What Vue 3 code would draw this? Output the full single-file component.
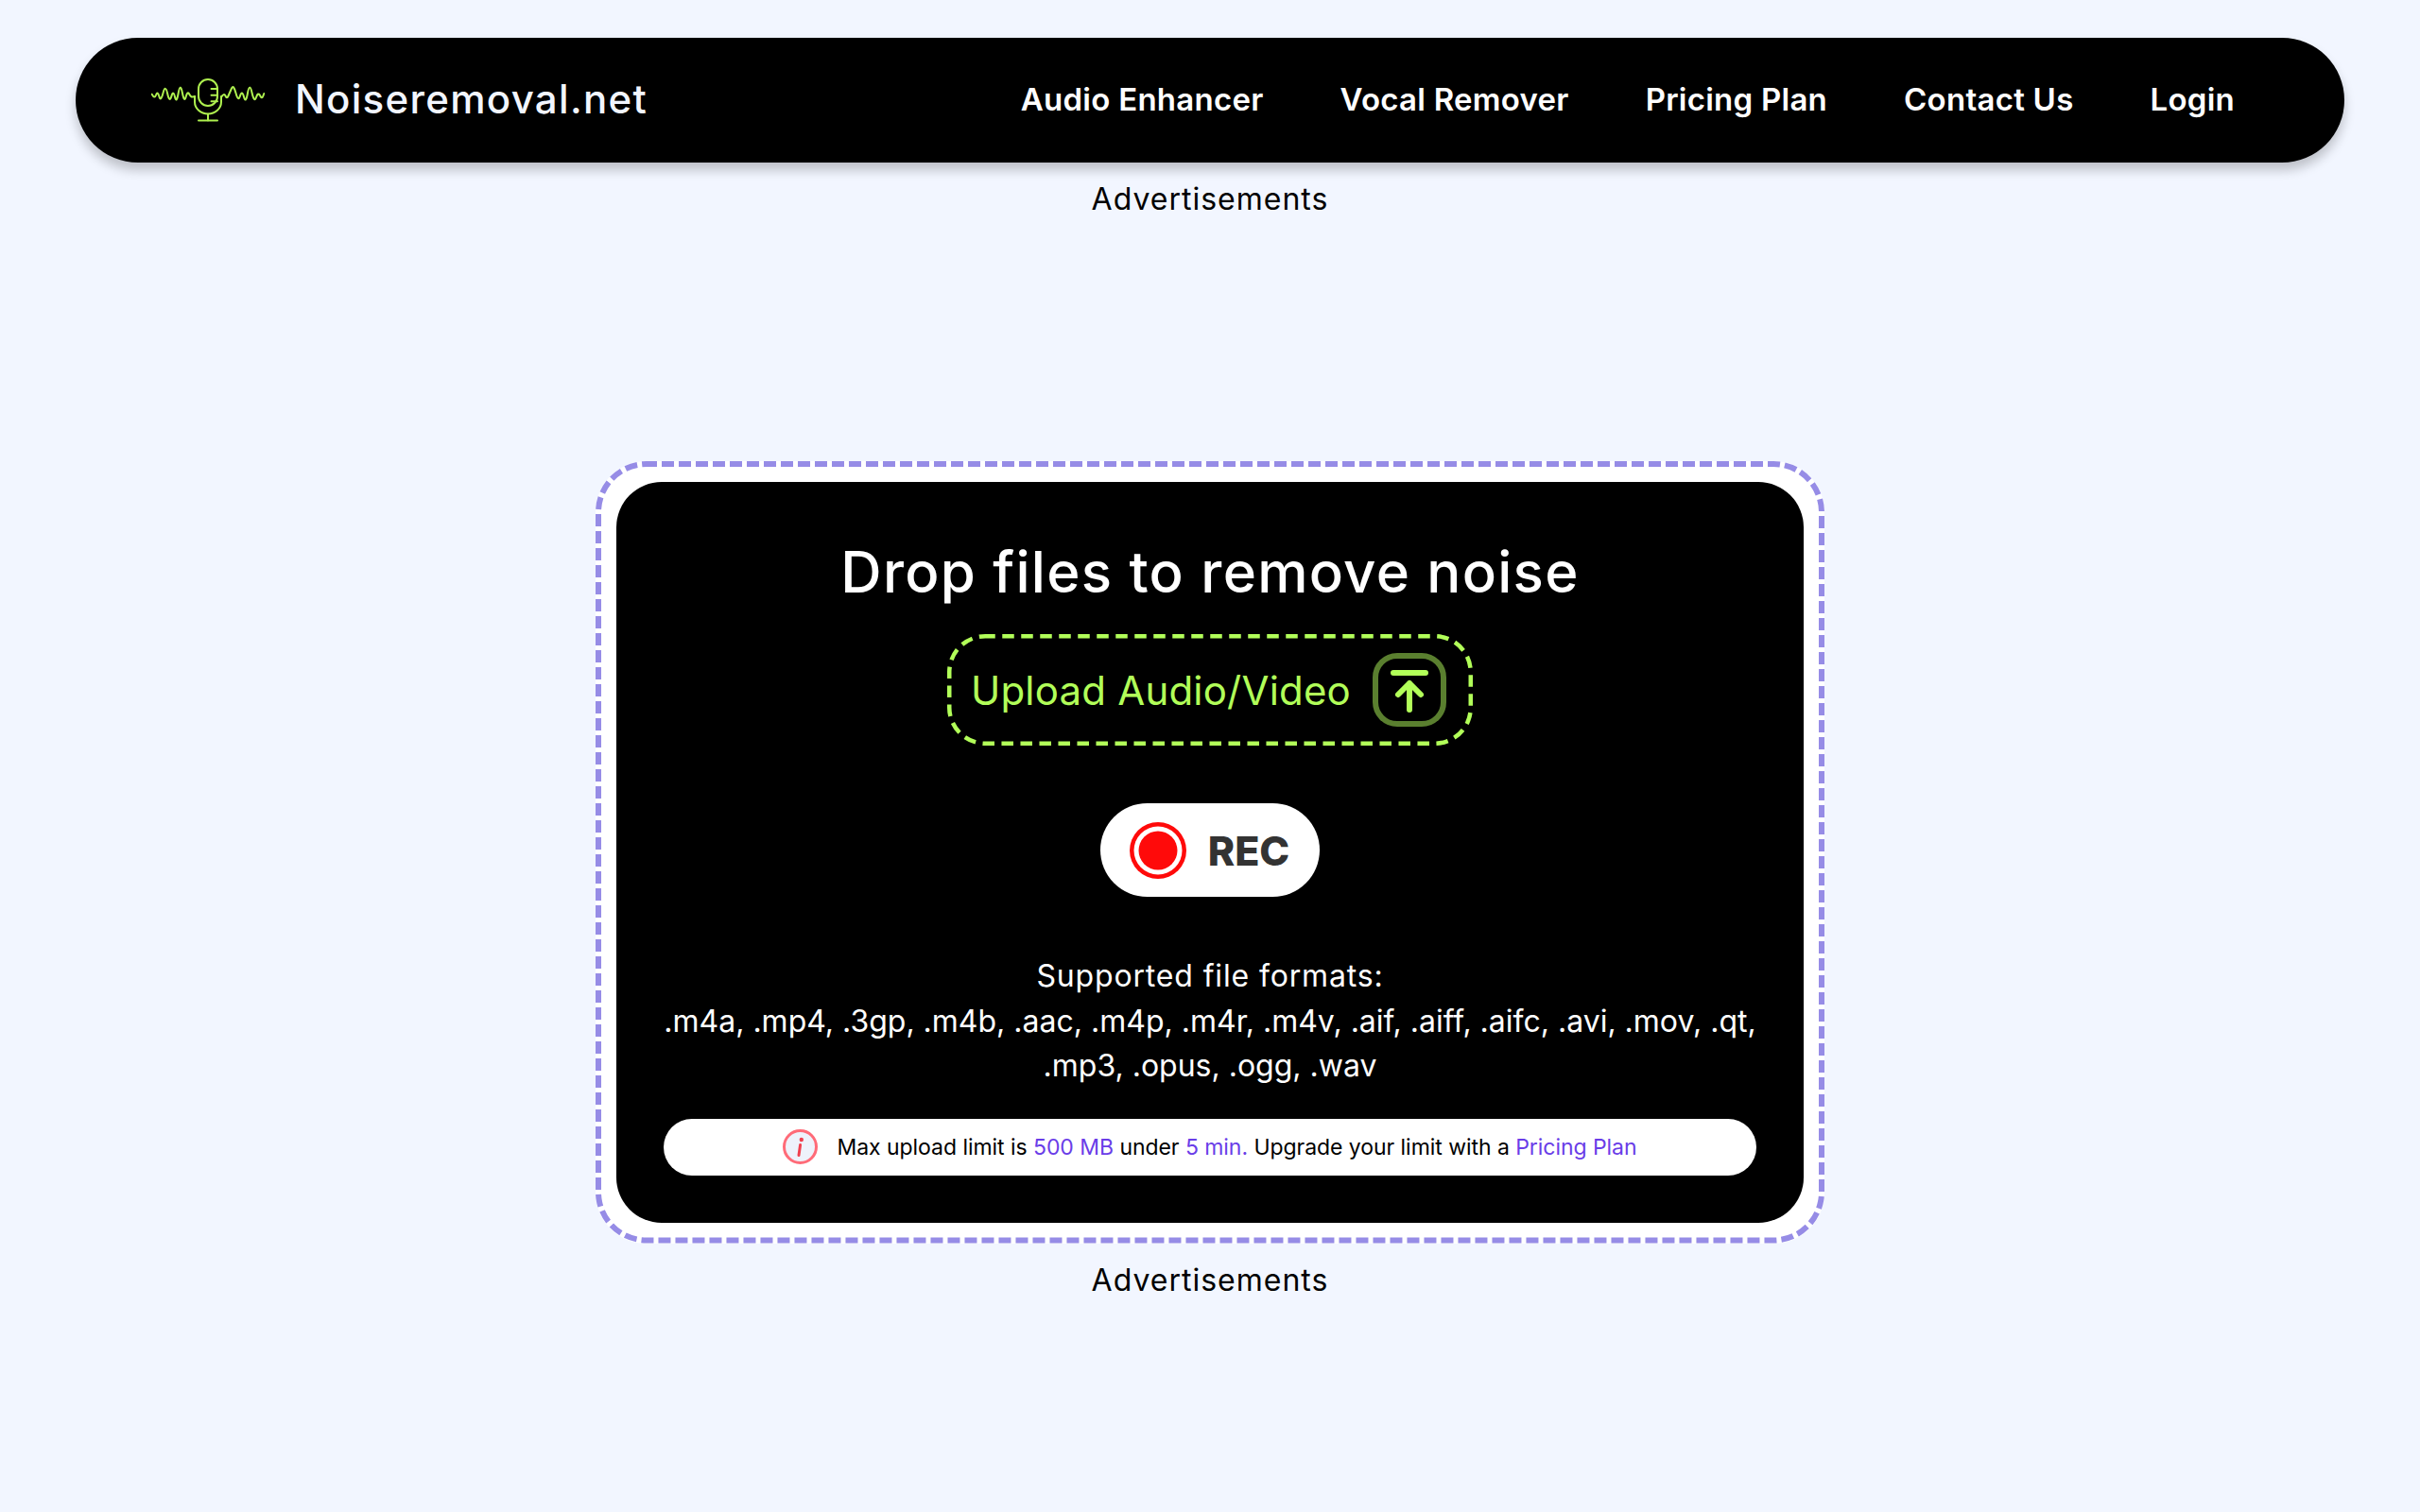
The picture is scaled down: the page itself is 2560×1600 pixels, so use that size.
<template>
  <div class="page">
    <header class="navbar">
      <div class="brand">
        <svg class="brand-logo" viewBox="0 0 120 46" fill="none" stroke="#aef04f" stroke-width="2" stroke-linecap="round" stroke-linejoin="round">
          <path :d="waveLeft" />
          <path :d="waveRight" />
          <rect x="50" y="1" width="20" height="28" rx="10" />
          <path d="M63.5 11H70M63.5 17.7H70M63.5 24.3H70" />
          <path d="M46 19v6a14 12.5 0 0 0 28 0v-6" />
          <path d="M60 37.7v7M50 44.6h20" />
        </svg>
        <span class="brand-name">Noiseremoval.net</span>
      </div>
      <nav class="nav-links">
        <a v-for="link in links" :key="link" class="nav-link">{{ link }}</a>
      </nav>
    </header>

    <p class="ad-label ad-top">Advertisements</p>

    <section class="drop-zone">
      <svg class="dash-frame"><rect class="dash-outer" /></svg>
      <div class="drop-card">
        <h1 class="drop-title">Drop files to remove noise</h1>

        <div class="upload-row">
          <button class="upload-btn">
            <svg class="dash-frame"><rect class="dash-upload" /></svg>
            <span class="upload-text">Upload Audio/Video</span>
            <svg class="upload-icon" viewBox="0 0 78 78" fill="none" stroke-linecap="round" stroke-linejoin="round">
              <rect x="3" y="3" width="72" height="72" rx="23" stroke="#5a7f2f" stroke-width="6" />
              <path d="M22 21h34M39 32v28M27 44l12-12 12 12" stroke="#b2ff59" stroke-width="6" />
            </svg>
          </button>
        </div>

        <div class="rec-row">
          <button class="rec-btn">
            <svg class="rec-dot" viewBox="0 0 60 60">
              <circle cx="30" cy="30" r="30" fill="#ff0a0a" />
              <circle cx="30" cy="30" r="25.5" fill="#fff" />
              <circle cx="30" cy="30" r="20.5" fill="#ff0a0a" />
            </svg>
            <span class="rec-text">REC</span>
          </button>
        </div>

        <div class="formats">
          <p class="formats-title">Supported file formats:</p>
          <p>.m4a, .mp4, .3gp, .m4b, .aac, .m4p, .m4r, .m4v, .aif, .aiff, .aifc, .avi, .mov, .qt,</p>
          <p>.mp3, .opus, .ogg, .wav</p>
        </div>

        <div class="limit-bar">
          <svg class="limit-icon" viewBox="0 0 37 37">
            <circle cx="18.5" cy="18.5" r="17" fill="#eef2fb" stroke="#ff6b78" stroke-width="3" />
            <circle cx="19.8" cy="11" r="2.2" fill="#f0404f" />
            <path d="M18.6 16.5l-1.6 11" stroke="#f0404f" stroke-width="3" stroke-linecap="round" />
          </svg>
          <span class="limit-text">Max upload limit is <em>500 MB</em> under <em>5 min.</em> Upgrade your limit with a <em>Pricing Plan</em></span>
        </div>
      </div>
    </section>

    <p class="ad-label ad-bottom">Advertisements</p>
  </div>
</template>

<script setup>
const links = ['Audio Enhancer', 'Vocal Remover', 'Pricing Plan', 'Contact Us', 'Login']

// smooth line through the wave points, using midpoints as curve ends
const smoothPath = (pts) => {
  let d = `M${pts[0][0]} ${pts[0][1]}`
  for (let i = 1; i < pts.length - 1; i++) {
    const mx = (pts[i][0] + pts[i + 1][0]) / 2
    const my = (pts[i][1] + pts[i + 1][1]) / 2
    d += `Q${pts[i][0]} ${pts[i][1]} ${mx} ${my}`
  }
  const last = pts[pts.length - 1]
  return d + `L${last[0]} ${last[1]}`
}

const waveLeft = smoothPath([
  [0.7, 16.7], [3.5, 22], [6.7, 13], [10, 25], [15, 6], [19.3, 26], [23.3, 12], [26.7, 27],
  [30.7, 4], [35, 26], [38.3, 13], [42, 20], [46, 19]
])
const waveRight = smoothPath([
  [74, 20], [77, 15], [80, 22], [83, 15], [87, 6], [92, 25], [96, 12], [100, 27],
  [104, 4], [109, 26], [113, 14], [117, 22], [119.3, 16]
])
</script>

<style scoped>
.page {
  min-height: 1600px;
  padding-top: 40px;
  box-sizing: border-box;
  font-family: Inter, "Liberation Sans", sans-serif;
  color: #000;
}

.navbar {
  margin: 0 80px;
  height: 132px;
  padding: 0 116px 0 80px;
  display: flex;
  align-items: center;
  justify-content: space-between;
  background: #000;
  border-radius: 66px;
  box-shadow: 0 8px 12px rgba(0, 0, 0, 0.22);
}

.brand {
  display: flex;
  align-items: center;
  gap: 32px;
}

.brand-logo {
  width: 120px;
  height: 46px;
}

.brand-name {
  padding-bottom: 3px;
  font-size: 42px;
  font-weight: 500;
  letter-spacing: 1.3px;
  color: #f2f6ff;
}

.nav-links {
  display: flex;
  gap: 81px;
  padding-bottom: 3px;
}

.nav-link {
  font-size: 33px;
  font-weight: 600;
  letter-spacing: 0.25px;
  color: #fff;
}

.ad-label {
  margin: 0;
  font-size: 32px;
  line-height: 48px;
  letter-spacing: 1px;
  text-align: center;
}

.ad-top {
  margin-top: 15px;
  margin-bottom: 253px;
}

.ad-bottom {
  margin-top: 15px;
}

/* dashed frames are svg so dash length and gap can follow the design */
.dash-frame {
  position: absolute;
  inset: 0;
  width: 100%;
  height: 100%;
  pointer-events: none;
}

.dash-outer {
  x: 3px;
  y: 3px;
  width: calc(100% - 6px);
  height: calc(100% - 6px);
  rx: 51px;
  ry: 51px;
  fill: none;
  stroke: #968ce6;
  stroke-width: 6;
  stroke-dasharray: 13 5;
  stroke-dashoffset: 2;
}

.dash-upload {
  x: 2.25px;
  y: 2.25px;
  width: calc(100% - 4.5px);
  height: calc(100% - 4.5px);
  rx: 38px;
  ry: 38px;
  fill: none;
  stroke: #b2ff59;
  stroke-width: 4.5;
  stroke-dasharray: 12.5 7.5;
  stroke-dashoffset: 2;
}

.drop-zone {
  position: relative;
  width: 1300px;
  box-sizing: border-box;
  margin: 0 auto;
  padding: 22px;
  background: #fff;
  border-radius: 54px;
}

.drop-card {
  padding: 50px;
  background: #000;
  border-radius: 48px;
  text-align: center;
}

.drop-title {
  margin: 0 0 21px;
  font-size: 60px;
  font-weight: 500;
  line-height: 90px;
  letter-spacing: 1.25px;
  color: #fff;
}

.upload-row,
.rec-row {
  display: flex;
  justify-content: center;
}

.upload-btn {
  position: relative;
  display: flex;
  align-items: center;
  gap: 23px;
  height: 118px;
  box-sizing: border-box;
  padding: 0 28px 0 25px;
  background: none;
  border: none;
  border-radius: 40px;
  font-family: inherit;
}

.upload-text {
  font-size: 42px;
  letter-spacing: 0.2px;
  color: #b2ff59;
}

.upload-icon {
  width: 78px;
  height: 78px;
}

.rec-row {
  margin-top: 61px;
}

.rec-btn {
  display: flex;
  align-items: center;
  gap: 23px;
  height: 99px;
  padding: 0 32px 0 31px;
  background: #fff;
  border: none;
  border-radius: 50px;
  font-family: inherit;
}

.rec-dot {
  width: 60px;
  height: 60px;
}

.rec-text {
  font-size: 43px;
  font-weight: 800;
  color: #333;
}

.formats {
  margin-top: 60px;
  font-size: 32px;
  line-height: 47.5px;
  color: #fff;
}

.formats p {
  margin: 0;
  white-space: nowrap;
}

.formats-title {
  letter-spacing: 0.85px;
}

.limit-bar {
  margin-top: 32px;
  height: 60px;
  display: flex;
  align-items: center;
  justify-content: center;
  gap: 20px;
  background: #fff;
  border-radius: 30px;
}

.limit-icon {
  width: 37px;
  height: 37px;
}

.limit-text {
  font-size: 23px;
  letter-spacing: -0.05px;
  color: #000;
}

.limit-text em {
  font-style: normal;
  color: #6a3de8;
}
</style>

<style>
body {
  background: #f2f6ff;
}
</style>
